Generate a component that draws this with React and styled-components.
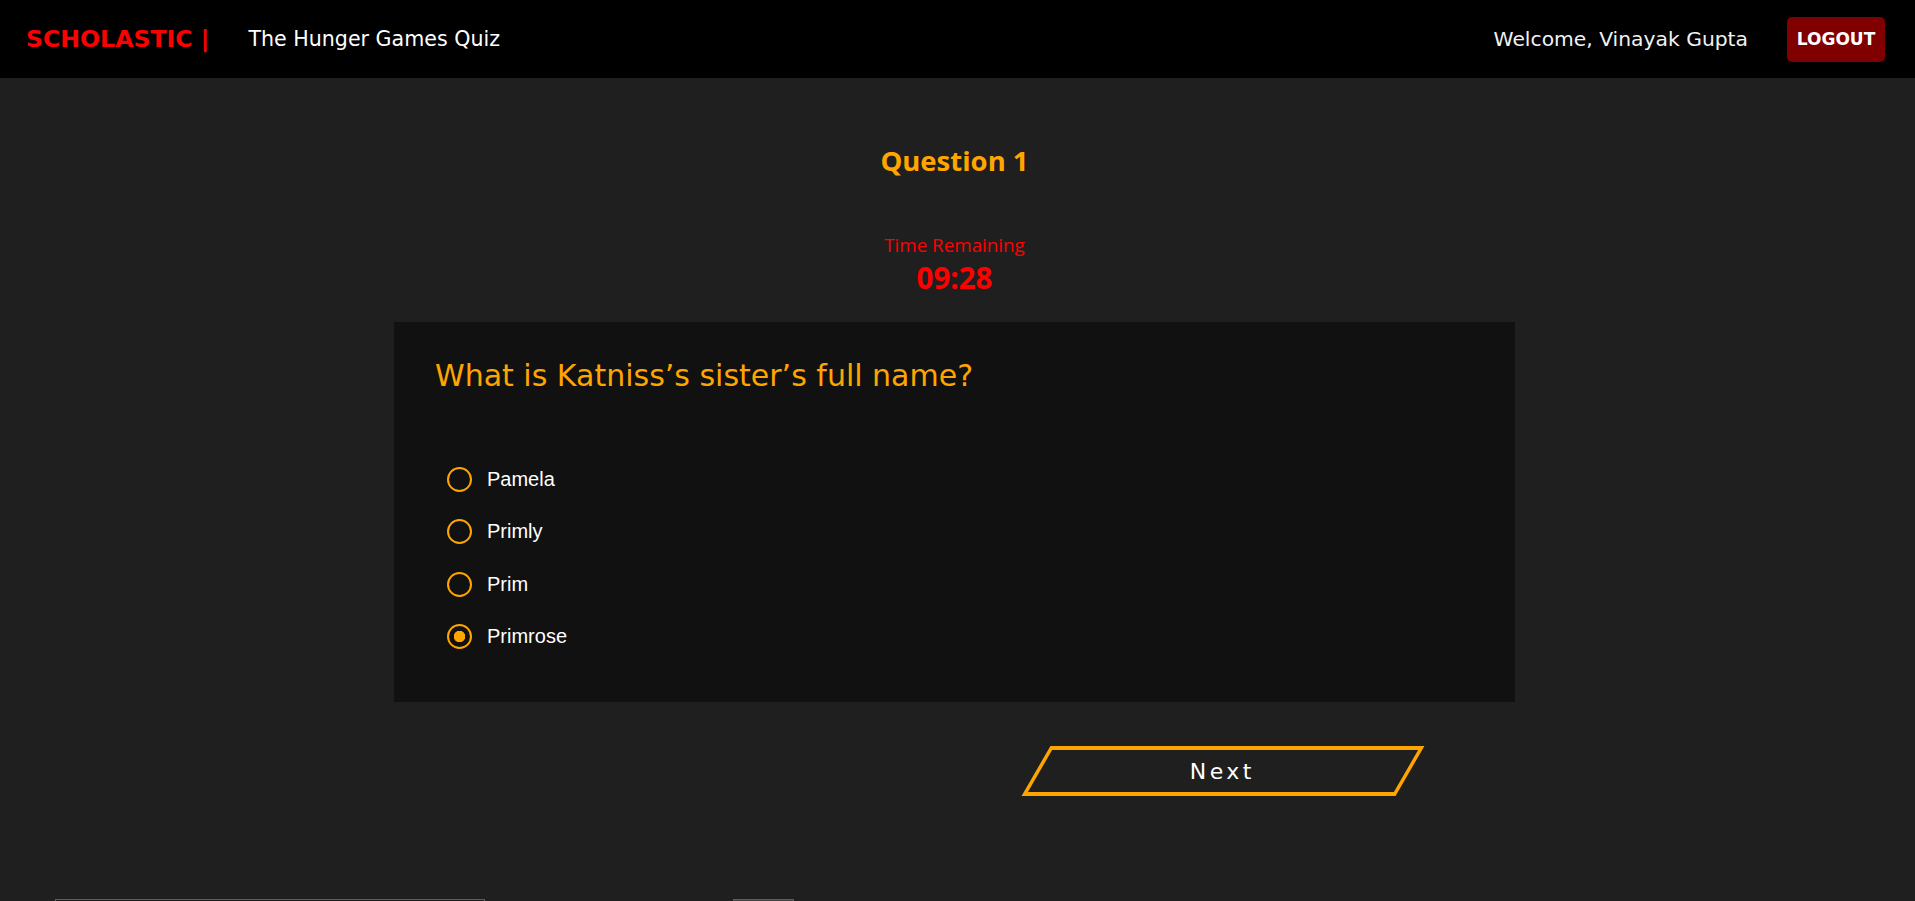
import React, {useState} from 'react';
import styled, {createGlobalStyle} from 'styled-components';

const GlobalStyle = createGlobalStyle`
  html, body {
    margin: 0;
    padding: 0;
    background-color: #1f1f1f;
  }
  * {
    box-sizing: border-box;
  }
`;

const Page = styled.div`
  display: flex;
  flex-direction: column;
  min-height: 100vh;
  background-color: #1f1f1f;
`;

const Header = styled.header`
  display: flex;
  align-items: center;
  height: 78px;
  padding: 0 30px 0 26px;
  background-color: #000;
  font-family: 'DejaVu Sans', 'Noto Sans', sans-serif;
`;
const Brand = styled.div`
  font-size: 23.6px;
  font-weight: 700;
  color: #ff0000;
  white-space: nowrap;
`;
const QuizTitle = styled.div`
  margin-left: 39px;
  font-size: 20.6px;
  color: #fff;
  white-space: nowrap;
`;
const UserArea = styled.div`
  display: flex;
  align-items: center;
  gap: 39px;
  margin-left: auto;
`;
const Welcome = styled.span`
  font-size: 20.3px;
  color: #f2f2f2;
  white-space: nowrap;
`;
const LogoutButton = styled.button`
  width: 98px;
  height: 45px;
  padding: 0;
  border: 0;
  border-radius: 5px;
  cursor: pointer;

  font-family: 'DejaVu Sans', sans-serif;
  font-size: 17px;
  font-weight: 700;
  color: #fff;
  background-color: #800000;
`;

const Main = styled.main`
  display: flex;
  flex-direction: column;
  align-items: center;
  padding: 67px 6px 0 0;
`;
const QuestionNumber = styled.h2`
  margin: 0;
  font-family: 'Open Sans', 'Noto Sans', sans-serif;
  font-size: 27.5px;
  line-height: 32px;
  font-weight: 700;
  color: #ffa500;
`;
const Timer = styled.div`
  display: flex;
  flex-direction: column;
  align-items: center;
  gap: 4px;
  margin-top: 56px;
  font-family: 'Open Sans', 'Noto Sans', sans-serif;
  color: #ff0000;
`;
const TimerLabel = styled.span`
  font-size: 18.8px;
  line-height: 24px;
`;
const TimerValue = styled.span`
  font-size: 29.5px;
  line-height: 34px;
  font-weight: 700;
`;

const Card = styled.section`
  width: 1121px;
  margin-top: 27px;
  padding: 37px 41px 39px;
  background-color: #111;
`;
const QuestionText = styled.h3`
  margin: 0;
  font-family: 'DejaVu Sans', 'Noto Sans', sans-serif;
  font-size: 30px;
  line-height: 34px;
  font-weight: 400;
  color: #ffa500;
`;
const OptionList = styled.div`
  display: flex;
  flex-direction: column;
  margin-top: 60px;
  padding-left: 12px;
`;
const OptionRow = styled.label`
  display: flex;
  align-items: center;
  gap: 15px;
  height: 52.5px;
  cursor: pointer;

  font-family: 'Liberation Sans', Arial, sans-serif;
  font-size: 20px;
  color: #fff;
`;
const Radio = styled.input`
  appearance: none;
  width: 25px;
  height: 25px;
  margin: 0;
  border: 2.5px solid #ffa500;
  border-radius: 50%;
  background: transparent;
  cursor: pointer;

  &:checked {
    background: radial-gradient(circle, #ffa500 0 5.5px, transparent 6px);
  }
`;

const NavRow = styled.div`
  display: flex;
  justify-content: flex-end;
  width: 1121px;
  margin-top: 44px;
  padding-right: 105px;
`;
const NextButton = styled.button`
  width: 374px;
  height: 50px;
  padding: 0;
  border: 4px solid #ffa500;
  background: transparent;
  transform: skewX(-30deg);
  cursor: pointer;
`;
const NextLabel = styled.span`
  display: inline-block;
  transform: skewX(30deg);
  font-family: 'DejaVu Sans', sans-serif;
  font-size: 22px;
  letter-spacing: 3.5px;
  color: #fff;
`;

const Footer = styled.div`
  display: flex;
  align-self: stretch;
  gap: 248px;
  margin-top: 103px;
  padding-left: 55px;
`;
const FooterBox = styled.div`
  width: ${props => props.$width}px;
  height: 40px;
  border: 1px solid #5c5c5c;
  background-color: ${props => (props.$filled ? '#444' : 'transparent')};
`;

const OPTIONS = ['Pamela', 'Primly', 'Prim', 'Primrose'];

export default function App() {
  const [answer, setAnswer] = useState('Primrose');

  return (
    <>
      <GlobalStyle />
      <Page>
        <Header>
          <Brand>SCHOLASTIC |</Brand>
          <QuizTitle>The Hunger Games Quiz</QuizTitle>
          <UserArea>
            <Welcome>Welcome, Vinayak Gupta</Welcome>
            <LogoutButton>LOGOUT</LogoutButton>
          </UserArea>
        </Header>
        <Main>
          <QuestionNumber>Question 1</QuestionNumber>
          <Timer>
            <TimerLabel>Time Remaining</TimerLabel>
            <TimerValue>09:28</TimerValue>
          </Timer>
          <Card>
            <QuestionText>What is Katniss’s sister’s full name?</QuestionText>
            <OptionList>
              {OPTIONS.map(opt => (
                <OptionRow key={opt}>
                  <Radio
                    type="radio"
                    name="q1"
                    checked={answer === opt}
                    onChange={() => setAnswer(opt)}
                  />
                  {opt}
                </OptionRow>
              ))}
            </OptionList>
          </Card>
          <NavRow>
            <NextButton>
              <NextLabel>Next</NextLabel>
            </NextButton>
          </NavRow>
          <Footer>
            <FooterBox $width={430} />
            <FooterBox $width={61} $filled />
          </Footer>
        </Main>
      </Page>
    </>
  );
}
